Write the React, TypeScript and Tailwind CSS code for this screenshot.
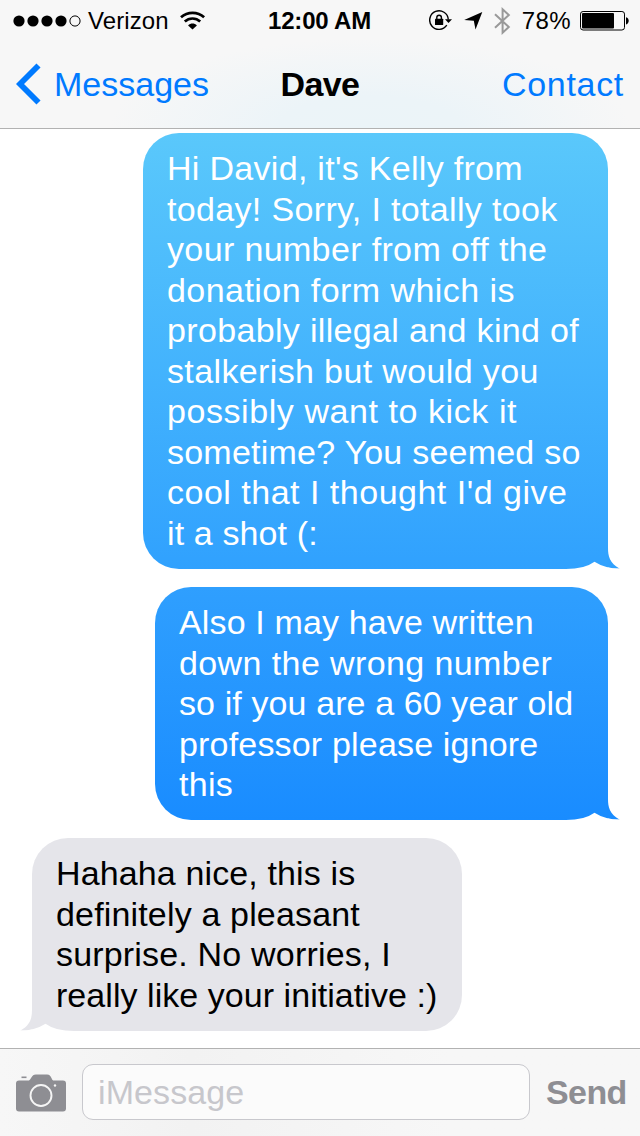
import { clsx } from "clsx";

type Line = { text: string; spacing: string };

type Message = {
  id: number;
  sent: boolean;
  bubble: string;
  tail: string;
  lines: Line[];
};

const messages: Message[] = [
  {
    id: 1,
    sent: true,
    bubble: "w-[465px] h-[436px] bg-linear-to-b from-[#5ac8fb] to-[#30a1fe]",
    tail: "#30a1fe",
    lines: [
      { text: "Hi David, it's Kelly from", spacing: "tracking-[0.3px]" },
      { text: "today! Sorry, I totally took", spacing: "tracking-[0.34px]" },
      { text: "your number from off the", spacing: "tracking-[0.36px]" },
      { text: "donation form which is", spacing: "tracking-[0.44px]" },
      { text: "probably illegal and kind of", spacing: "tracking-[0.34px]" },
      { text: "stalkerish but would you", spacing: "tracking-[0.37px]" },
      { text: "possibly want to kick it", spacing: "tracking-[0.57px]" },
      { text: "sometime? You seemed so", spacing: "tracking-[0.23px]" },
      { text: "cool that I thought I'd give", spacing: "tracking-[0.5px]" },
      { text: "it a shot (:", spacing: "tracking-[0.12px]" },
    ],
  },
  {
    id: 2,
    sent: true,
    bubble: "w-[453px] h-[233px] bg-linear-to-b from-[#2f9ffe] to-[#198cff]",
    tail: "#198cff",
    lines: [
      { text: "Also I may have written", spacing: "tracking-[0.14px]" },
      { text: "down the wrong number", spacing: "tracking-[0.4px]" },
      { text: "so if you are a 60 year old", spacing: "tracking-[0.11px]" },
      { text: "professor please ignore", spacing: "tracking-[0.18px]" },
      { text: "this", spacing: "tracking-[0.3px]" },
    ],
  },
  {
    id: 3,
    sent: false,
    bubble: "w-[430px] h-[193px] bg-[#e5e5ea]",
    tail: "#e5e5ea",
    lines: [
      { text: "Hahaha nice, this is", spacing: "tracking-[0.13px]" },
      { text: "definitely a pleasant", spacing: "tracking-[0.16px]" },
      { text: "surprise. No worries, I", spacing: "tracking-[0.18px]" },
      { text: "really like your initiative :)", spacing: "tracking-[0.05px]" },
    ],
  },
];

const SignalDots = () => (
  <svg width="68" height="12" viewBox="0 0 68 12">
    {[6, 20, 34, 48].map((cx) => (
      <circle key={cx} cx={cx} cy="6" r="5.6" fill="#000" />
    ))}
    <circle cx="62" cy="6" r="5.1" fill="none" stroke="#000" />
  </svg>
);

const WifiIcon = () => (
  <svg width="26" height="20" viewBox="0 0 26 20" fill="none" stroke="#000">
    <path d="M1 6.3C7.6.3 17.6.3 24.100 6.3" strokeWidth="2.7" />
    <path d="M4.800 10.500c4.400-4 11-4 15.400 0" strokeWidth="2.7" />
    <path d="M8.100 14.400c2.500-2.400 6.300-2.400 8.800 0L12.500 18.600z" fill="#000" stroke="none" />
  </svg>
);

const RotationLockIcon = () => (
  <svg width="24" height="22" viewBox="0 0 24 22" fill="none">
    <path d="M17.800 15.200A9.300 9.300 0 1 1 19.300 9.500" stroke="#000" strokeWidth="1.4" />
    <path d="M16 9.300h7l-3.500 3.800z" fill="#000" />
    <rect x="6" y="8.700" width="8.200" height="6.300" rx=".5" fill="#000" />
    <path d="M7.800 9.500V7.600a2.300 2.300 0 0 1 4.600 0v1.900" stroke="#000" strokeWidth="1.4" />
  </svg>
);

const LocationIcon = () => (
  <svg width="19" height="18" viewBox="0 0 19 18">
    <path d="M18.300 0 11.500 17.600 9.800 8.700.2 7.900z" fill="#000" />
  </svg>
);

const BluetoothIcon = () => (
  <svg width="17" height="28" viewBox="0 0 17 28" fill="none" stroke="#999" strokeWidth="2">
    <path d="M1 7.300 14.800 20 8.600 25.700V2.300l6.200 5.800L1 20.800" />
  </svg>
);

const BatteryIcon = () => (
  <svg width="49" height="20" viewBox="0 0 49 20">
    <rect x=".5" y=".5" width="44" height="18.500" rx="2.600" fill="none" stroke="#000" />
    <rect x="2" y="2" width="32" height="15.500" rx="1" fill="#000" />
    <path d="M46 6.200c3.600.6 3.600 6.600 0 7.200z" fill="#000" />
  </svg>
);

const CameraIcon = () => (
  <svg width="50" height="38" viewBox="0 0 50 38">
    <rect x="5.500" y="2.500" width="5" height="1.600" fill="#8e8e93" />
    <path
      d="M3 6.600h10c1.600-1 2.500-4.100 4.200-5.300Q18 .6 20 .6h11q2 0 2.800.8c1.600 1.400 2 4.300 3.400 5.200H47a3 3 0 0 1 3 3v25a3 3 0 0 1-3 3H3a3 3 0 0 1-3-3v-25a3 3 0 0 1 3-3z"
      fill="#8e8e93"
    />
    <circle cx="25" cy="21.500" r="10.500" fill="none" stroke="#f5f5f5" strokeWidth="1.900" />
    <circle cx="39" cy="11.500" r="1.200" fill="#f5f5f5" />
  </svg>
);

const BubbleTail = ({ color, sent }: { color: string; sent: boolean }) => (
  <svg
    className={clsx("absolute bottom-0", sent ? "-right-3" : "-left-3 -scale-x-100")}
    width="54"
    height="21"
    viewBox="0 0 54 21"
  >
    <path d="M41.500 0H42C42 8 43.500 15 53.800 20.700Q47 21 41.500 19.500z" fill={color} />
    <path d="M0 21Q18.500 21 28.500 13.700Q39 20.500 54 20.500V21.500H0z" fill="#fff" />
  </svg>
);

const StatusBar = () => (
  <div className="flex h-[42px] items-center justify-between pr-[11px] pl-[13px] text-[24px]">
    <div className="flex w-[220px] items-center">
      <SignalDots />
      <span className="mr-[11px] ml-[7px] tracking-[0.1px]">Verizon</span>
      <WifiIcon />
    </div>
    <span className="mr-[3px] font-bold tracking-[-0.2px]">12:00 AM</span>
    <div className="flex w-[220px] items-center justify-end">
      <RotationLockIcon />
      <span className="ml-[11px]">
        <LocationIcon />
      </span>
      <span className="ml-[11px]">
        <BluetoothIcon />
      </span>
      <span className="mr-[9px] ml-[11px] tracking-[0.4px]">78%</span>
      <BatteryIcon />
    </div>
  </div>
);

const Header = () => (
  <header className="h-[129px] border-b border-[#b2b2b2] bg-[#f7f7f7] bg-[radial-gradient(ellipse_260px_90px_at_370px_128px,#ebf4f8_0%,#ecf4f8_35%,#f7f7f7_100%)]">
    <StatusBar />
    <div className="grid h-[84px] grid-cols-3 items-center px-4 text-[34px]">
      <button className="flex items-center text-[#007aff]" type="button">
        <svg width="25" height="42" viewBox="0 0 25 42" fill="none">
          <path d="M22.500 2.500 4 21l18.500 18.500" stroke="#007aff" strokeWidth="5.800" />
        </svg>
        <span className="ml-[13px]">Messages</span>
      </button>
      <h1 className="text-center font-bold tracking-[-0.6px]">Dave</h1>
      <button className="text-right tracking-[0.7px] text-[#007aff]" type="button">
        Contact
      </button>
    </div>
  </header>
);

const Bubble = ({ message }: { message: Message }) => (
  <div
    className={clsx(
      "relative rounded-[36px] px-6 pt-[15px] text-[34px] leading-[40.55px] whitespace-nowrap",
      message.bubble,
      message.sent ? "self-end rounded-br-none text-white" : "self-start rounded-bl-none text-black",
    )}
  >
    {message.lines.map((line) => (
      <p key={line.text} className={line.spacing}>
        {line.text}
      </p>
    ))}
    <BubbleTail color={message.tail} sent={message.sent} />
  </div>
);

const Composer = () => (
  <footer className="flex h-[88px] items-center border-t border-[#b2b2b2] bg-linear-to-r from-[#f7f7f7] via-[#f2f2f2] via-30% to-[#f7f7f7] to-70% pl-4">
    <CameraIcon />
    <div className="mb-px ml-4 flex h-14 w-[448px] items-center rounded-[11px] border border-[#c8c8cd] bg-[#fbfbfb] pl-[15px] text-[34px] tracking-[0.1px] text-[#c7c7cc]">
      iMessage
    </div>
    <button className="ml-4 text-[34px] font-bold tracking-[-0.6px] text-[#8e8e93]" type="button">
      Send
    </button>
  </footer>
);

const App = () => {
  return (
    <div className="flex h-[1136px] w-[640px] flex-col overflow-hidden bg-white font-['Liberation_Sans',Arial,sans-serif] text-black">
      <Header />
      <main className="flex flex-1 flex-col gap-[18px] px-8 pt-1">
        {messages.map((message) => (
          <Bubble key={message.id} message={message} />
        ))}
      </main>
      <Composer />
    </div>
  );
};

export default App;
